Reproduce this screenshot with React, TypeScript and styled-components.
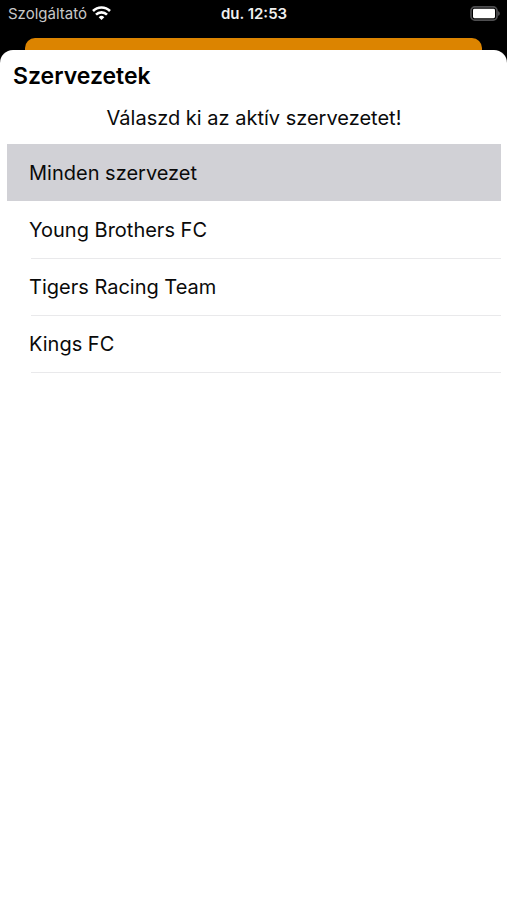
import React, { useState } from "react";
import styled, { createGlobalStyle } from "styled-components";

const GlobalStyle = createGlobalStyle`
  * { box-sizing: border-box; }
  html, body { margin: 0; background: #000; }
  body { font-family: Inter, "Liberation Sans", sans-serif; }
`;

const Screen = styled.div`
  min-height: 100vh;
  display: flex;
  flex-direction: column;
  background: #000;
`;

const StatusBar = styled.header`
  display: grid;
  grid-template-columns: 1fr auto 1fr;
  align-items: center;
  height: 28px;
  padding: 0 7px 0 8px;
  color: #fff;
  font-size: 15px;
  line-height: 20px;
`;

const Carrier = styled.div`
  display: flex;
  align-items: center;
  gap: 5px;
  color: #c8c8c8;

  svg {
    margin-bottom: 2px;
  }
`;

const Clock = styled.time`
  color: #f0f0f0;
  font-weight: 600;
`;

const BatterySlot = styled.div`
  display: flex;
  justify-content: flex-end;
  padding-bottom: 2px;
`;

const BackCard = styled.div`
  height: 24px;
  margin: 10px 25px 0;
  border-radius: 10px 10px 0 0;
  background: #dc8400;
`;

const Sheet = styled.main`
  flex: 1;
  margin-top: -12px;
  padding: 12px 6px 0 7px;
  border-radius: 13px 13px 0 0;
  background: #fff;
  color: #0a0a0a;
`;

const Title = styled.h1`
  margin: 0;
  padding-left: 6px;
  color: #000;
  font-size: 23px;
  line-height: 28px;
  font-weight: 600;
`;

const Prompt = styled.p`
  margin: 0;
  padding: 14px 0 12px;
  font-size: 20px;
  line-height: 28px;
  text-align: center;
`;

const List = styled.ul`
  margin: 0;
  padding: 0;
  list-style: none;
`;

const Row = styled.button<{ $active: boolean }>`
  display: block;
  width: 100%;
  height: 57px;
  padding: 0 0 0 24px;
  border: 0;
  background: ${(p) => (p.$active ? "#d1d1d6" : "transparent")};
  color: inherit;
  font: inherit;
  font-size: 20px;
  line-height: 28px;
  text-align: left;
  text-indent: -2px;
  cursor: pointer;
`;

const RowLabel = styled.span<{ $active: boolean }>`
  display: block;
  height: 58px;
  padding-top: 15px;
  border-bottom: 1px solid ${(p) => (p.$active ? "transparent" : "#e9e9eb")};
`;

const organizations = ["Minden szervezet", "Young Brothers FC", "Tigers Racing Team", "Kings FC"];

const WifiIcon = () => (
  <svg width="19" height="14" viewBox="0 0 19 14" fill="none" stroke="#fff" strokeWidth="2.6" aria-hidden="true">
    <path d="M1 5a12 12 0 0 1 17 0" />
    <path d="M4 8.6a7.8 7.8 0 0 1 11 0" />
    <path d="M9.5 14 6.7 11.2a4 4 0 0 1 5.6 0z" fill="#fff" stroke="none" />
  </svg>
);

const BatteryIcon = () => (
  <svg width="30" height="15" viewBox="0 0 30 15" role="img" aria-label="Akkumulátor">
    <rect x="1" y="0.9" width="26" height="13.2" rx="3.8" fill="none" stroke="#4e4e50" strokeWidth="1.7" />
    <rect x="3" y="2.8" width="22" height="9.4" rx="1.4" fill="#fff" />
    <path d="M28.2 5.2c2 .6 2 4 0 4.6z" fill="#5e5e60" />
  </svg>
);

export default function App() {
  const [selected, setSelected] = useState(organizations[0]);
  return (
    <>
      <GlobalStyle />
      <Screen>
        <StatusBar>
          <Carrier>
            Szolgáltató
            <WifiIcon />
          </Carrier>
          <Clock>du. 12:53</Clock>
          <BatterySlot>
            <BatteryIcon />
          </BatterySlot>
        </StatusBar>
        <BackCard />
        <Sheet>
          <Title>Szervezetek</Title>
          <Prompt>Válaszd ki az aktív szervezetet!</Prompt>
          <List>
            {organizations.map((name) => (
              <li key={name}>
                <Row $active={name === selected} aria-pressed={name === selected} onClick={() => setSelected(name)}>
                  <RowLabel $active={name === selected}>{name}</RowLabel>
                </Row>
              </li>
            ))}
          </List>
        </Sheet>
      </Screen>
    </>
  );
}
